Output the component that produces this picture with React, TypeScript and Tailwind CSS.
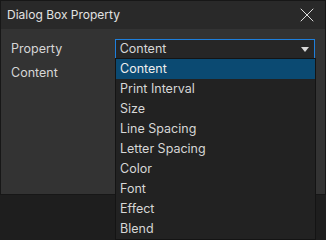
import { X } from "lucide-react";

const options = [
  "Content",
  "Print Interval",
  "Size",
  "Line Spacing",
  "Letter Spacing",
  "Color",
  "Font",
  "Effect",
  "Blend",
];

export default function App() {
  return (
    <div
      className="relative h-[240px] w-[326px] overflow-hidden bg-[#1e1e1e] text-[12.5px] text-[#d6d6d6]"
      style={{ fontFamily: 'Inter, "Noto Sans", sans-serif' }}
    >
      {/* Dialog */}
      <div className="flex h-[195px] w-[326px] flex-col border border-[#171717] bg-[#333333]">
        <div className="flex h-[28px] shrink-0 items-center justify-between bg-[#292929] pl-[6px] pr-[6px]">
          <span className="text-[12px] text-[#e2e2e2]">Dialog Box Property</span>
          <X size={24} strokeWidth={1} className="text-[#dcdcdc]" />
        </div>

        <div className="relative flex flex-col gap-[4px] px-[10px] pt-[10px]">
          <div className="flex h-[20px] items-center">
            <span className="w-[104px]">Property</span>
            <div className="flex h-[20px] w-[201px] items-center justify-between border border-[#1e7fdc] bg-[#262626] pl-[4px] pr-[5px]">
              <span>Content</span>
              <svg width="8" height="5" viewBox="0 0 8 5">
                <path d="M0 0H8L4 5Z" fill="#d8d8d8" />
              </svg>
            </div>
          </div>
          <div className="flex h-[20px] items-center">
            <span>Content</span>
          </div>
        </div>
      </div>

      {/* Open dropdown list */}
      <ul className="absolute left-[115px] top-[58px] w-[201px] border border-[#141414] bg-[#222222]">
        {options.map((opt, i) => (
          <li
            key={opt}
            className={`flex h-[20px] items-center px-[4px] ${
              i === 0 ? "bg-[#0b4a72] text-[#eeeeee]" : ""
            }`}
          >
            {opt}
          </li>
        ))}
      </ul>
    </div>
  );
}
